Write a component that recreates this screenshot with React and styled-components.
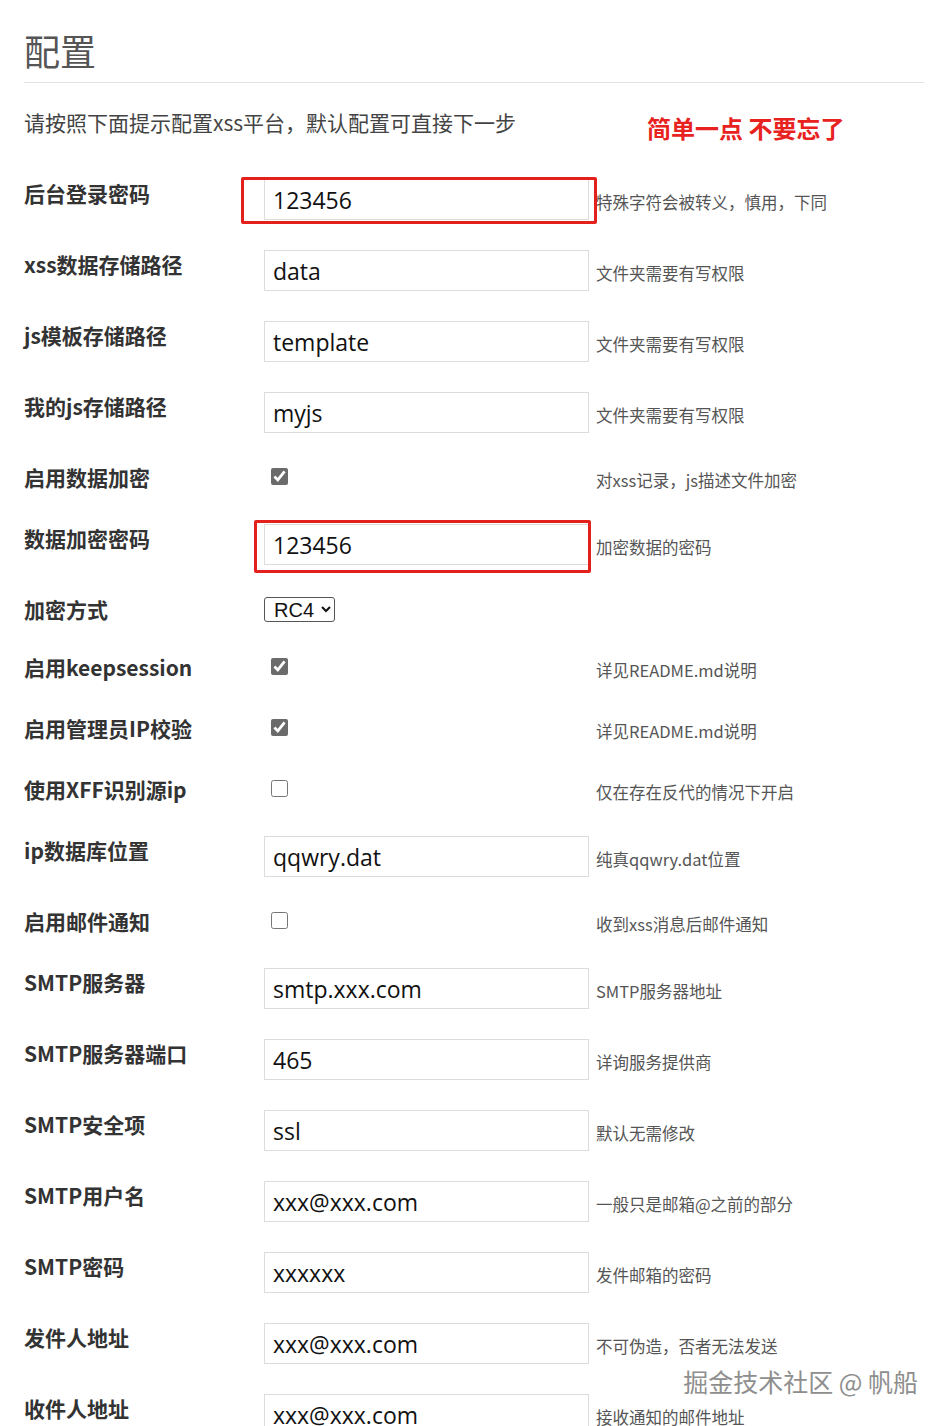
import styled, { createGlobalStyle } from 'styled-components';

const GlobalStyle = createGlobalStyle`
  body {
    margin: 0;
    background: #fff;
    font-family: "Noto Sans CJK SC", "Noto Sans", sans-serif;
    overflow: hidden;
  }
`;

const rows = [
  { label: '后台登录密码', type: 'text', value: '123456', hint: '特殊字符会被转义，慎用，下同', box: { l: -23, t: -2, w: 356, h: 47 } },
  { label: 'xss数据存储路径', type: 'text', value: 'data', hint: '文件夹需要有写权限' },
  { label: 'js模板存储路径', type: 'text', value: 'template', hint: '文件夹需要有写权限' },
  { label: '我的js存储路径', type: 'text', value: 'myjs', hint: '文件夹需要有写权限' },
  { label: '启用数据加密', type: 'check', checked: true, hint: '对xss记录，js描述文件加密' },
  { label: '数据加密密码', type: 'text', value: '123456', hint: '加密数据的密码', box: { l: -10, t: -4, w: 337, h: 53 } },
  { label: '加密方式', type: 'select', value: 'RC4' },
  { label: '启用keepsession', type: 'check', checked: true, hint: '详见README.md说明' },
  { label: '启用管理员IP校验', type: 'check', checked: true, hint: '详见README.md说明' },
  { label: '使用XFF识别源ip', type: 'check', checked: false, hint: '仅在存在反代的情况下开启' },
  { label: 'ip数据库位置', type: 'text', value: 'qqwry.dat', hint: '纯真qqwry.dat位置' },
  { label: '启用邮件通知', type: 'check', checked: false, hint: '收到xss消息后邮件通知' },
  { label: 'SMTP服务器', type: 'text', value: 'smtp.xxx.com', hint: 'SMTP服务器地址' },
  { label: 'SMTP服务器端口', type: 'text', value: '465', hint: '详询服务提供商' },
  { label: 'SMTP安全项', type: 'text', value: 'ssl', hint: '默认无需修改' },
  { label: 'SMTP用户名', type: 'text', value: 'xxx@xxx.com', hint: '一般只是邮箱@之前的部分' },
  { label: 'SMTP密码', type: 'text', value: 'xxxxxx', hint: '发件邮箱的密码' },
  { label: '发件人地址', type: 'text', value: 'xxx@xxx.com', hint: '不可伪造，否者无法发送' },
  { label: '收件人地址', type: 'text', value: 'xxx@xxx.com', hint: '接收通知的邮件地址' },
];

const App = () => {
  return (
    <Page>
      <GlobalStyle />
      <Title>配置</Title>
      <Intro>
        <IntroText>请按照下面提示配置xss平台，默认配置可直接下一步</IntroText>
        <Note>简单一点 不要忘了</Note>
      </Intro>
      <Form>
        {rows.map((row) => (
          <Row key={row.label}>
            <Label>{row.label}</Label>
            {row.type === 'text' && (
              <InputWrap>
                <TextInput defaultValue={row.value} />
                {row.box && (
                  <Highlight
                    style={{
                      left: row.box.l,
                      top: row.box.t,
                      width: row.box.w,
                      height: row.box.h,
                    }}
                  />
                )}
              </InputWrap>
            )}
            {row.type === 'check' && (
              <CheckWrap>
                <Check type="checkbox" defaultChecked={row.checked} />
              </CheckWrap>
            )}
            {row.type === 'select' && (
              <SelectWrap>
                <Select defaultValue={row.value}>
                  <option>RC4</option>
                  <option>AES</option>
                </Select>
              </SelectWrap>
            )}
            {row.hint && <Hint $type={row.type}>{row.hint}</Hint>}
          </Row>
        ))}
      </Form>
      <Watermark>掘金技术社区 @ 帆船</Watermark>
    </Page>
  );
};

export default App;

const Page = styled.div`
  position: relative;
  width: 900px;
  height: 1426px;
  padding: 30px 25px 0 24px;
  box-sizing: content-box;
`;

const Title = styled.h1`
  margin: 0;
  font-size: 36px;
  line-height: 40px;
  font-weight: 400;
  color: #555;
  padding-bottom: 12px;
  border-bottom: 1px solid #e3e3e3;
`;

const Intro = styled.div`
  display: grid;
  grid-template-columns: 623px auto;
  margin-top: 25px;
  height: 36px;
  align-items: start;
`;

const IntroText = styled.p`
  margin: 0;
  font-size: 21px;
  line-height: 28px;
  color: #444;
`;

const Note = styled.span`
  font-size: 24px;
  line-height: 30px;
  font-weight: 700;
  color: #e8231f;
  padding-top: 5px;
  white-space: nowrap;
`;

const Form = styled.div`
  margin-top: 35px;
`;

const Row = styled.div`
  display: grid;
  grid-template-columns: 240px 332px 1fr;
  align-items: start;
  margin-bottom: 30px;
`;

const Label = styled.div`
  font-size: 21px;
  line-height: 28px;
  font-weight: 700;
  color: #333;
  white-space: nowrap;
`;

const InputWrap = styled.div`
  position: relative;
  width: 325px;
  height: 41px;
`;

const TextInput = styled.input`
  box-sizing: border-box;
  width: 100%;
  height: 100%;
  border: 1px solid #dcdcdc;
  padding: 0 8px;
  font-family: "Open Sans", "Noto Sans", sans-serif;
  font-size: 23px;
  color: #111;
  background: #fff;
  outline: none;
`;

const Highlight = styled.div`
  position: absolute;
  box-sizing: border-box;
  border: 3px solid #e3201c;
  border-radius: 2px;
  pointer-events: none;
`;

const CheckWrap = styled.div`
  height: 31px;
`;

const Check = styled.input`
  width: 17px;
  height: 17px;
  margin: 5px 0 0 7px;
  accent-color: #6b6b6b;
`;

const SelectWrap = styled.div`
  height: 28px;
`;

const Select = styled.select`
  margin-top: 2px;
  height: 25px;
  font-family: "Liberation Sans", "Noto Sans", sans-serif;
  font-size: 20px;
  color: #111;
  border: 1px solid #555;
  border-radius: 3px;
  background: #fff;
  padding: 0 3px 0 5px;
`;

const Hint = styled.div`
  font-size: 16.5px;
  line-height: 22px;
  color: #555;
  white-space: nowrap;
  padding-top: ${({ $type }) => ($type === 'text' ? '12px' : '6px')};
`;

const Watermark = styled.div`
  position: absolute;
  right: 31px;
  top: 1364px;
  font-size: 25px;
  line-height: 34px;
  color: #8e8e8e;
  text-shadow: 0 0 2px #fff, 0 0 2px #fff;
`;
